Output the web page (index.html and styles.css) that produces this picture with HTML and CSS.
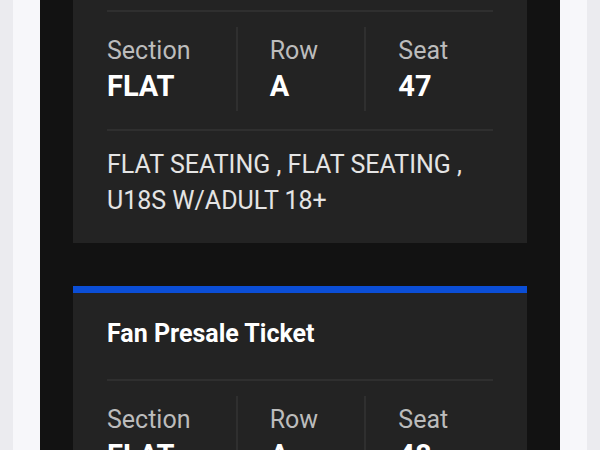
FILE: index.html
```html
<!DOCTYPE html>
<html lang="en">
<head>
<meta charset="utf-8">
<title>Tickets</title>
<link rel="stylesheet" href="styles.css">
</head>
<body>
<div class="page">
  <div class="screen">
    <section class="ticket ticket-first">
      <div class="divider"></div>
      <div class="seats">
        <div class="seat-col"><div class="label">Section</div><div class="value">FLAT</div></div>
        <div class="seat-col"><div class="label">Row</div><div class="value">A</div></div>
        <div class="seat-col"><div class="label">Seat</div><div class="value">47</div></div>
      </div>
      <div class="divider"></div>
      <p class="desc">FLAT SEATING , FLAT SEATING ,<br>U18S W/ADULT 18+</p>
    </section>
    <section class="ticket ticket-accent">
      <h2 class="title">Fan Presale Ticket</h2>
      <div class="divider"></div>
      <div class="seats">
        <div class="seat-col"><div class="label">Section</div><div class="value">FLAT</div></div>
        <div class="seat-col"><div class="label">Row</div><div class="value">A</div></div>
        <div class="seat-col"><div class="label">Seat</div><div class="value">48</div></div>
      </div>
      <div class="divider"></div>
      <p class="desc">FLAT SEATING , FLAT SEATING ,<br>U18S W/ADULT 18+</p>
    </section>
  </div>
</div>
</body>
</html>
```
FILE: styles.css
```css
* { box-sizing: border-box; }
html, body { margin: 0; padding: 0; }
body {
  background: #ebebef;
  font-family: Roboto, "Liberation Sans", sans-serif;
  height: 450px;
  overflow: hidden;
}
.page {
  margin: 0 13px;
  padding: 0 27px;
  background: #f7f7fa;
  min-height: 450px;
}
.screen {
  background: #121212;
  padding: 0 33px 40px;
  min-height: 450px;
}
.ticket {
  background: #232323;
  padding: 0 34px 24px;
}
.ticket-first { padding-top: 10px; }
.ticket-accent {
  margin-top: 43px;
  border-top: 7px solid #0b4ed6;
  padding-top: 25px;
}
.divider {
  height: 2px;
  background: #2f2f2f;
}
.title {
  margin: 0 0 29px;
  font-size: 25px;
  line-height: 32px;
  font-weight: 700;
  color: #ffffff;
}
.seats {
  display: grid;
  grid-template-columns: repeat(3, 1fr);
  margin: 15px 0 18px;
}
.seat-col {
  padding: 8px 0 8px 32px;
  border-left: 2px solid #2f2f2f;
}
.seat-col:first-child {
  padding-left: 0;
  border-left: none;
}
.label {
  font-size: 25px;
  line-height: 32px;
  color: #bcbcbc;
}
.value {
  margin-top: 2px;
  font-size: 29px;
  line-height: 34px;
  font-weight: 700;
  color: #ffffff;
}
.desc {
  margin: 16px 0 0;
  font-size: 25px;
  line-height: 36px;
  color: #e4e4e4;
}
```
